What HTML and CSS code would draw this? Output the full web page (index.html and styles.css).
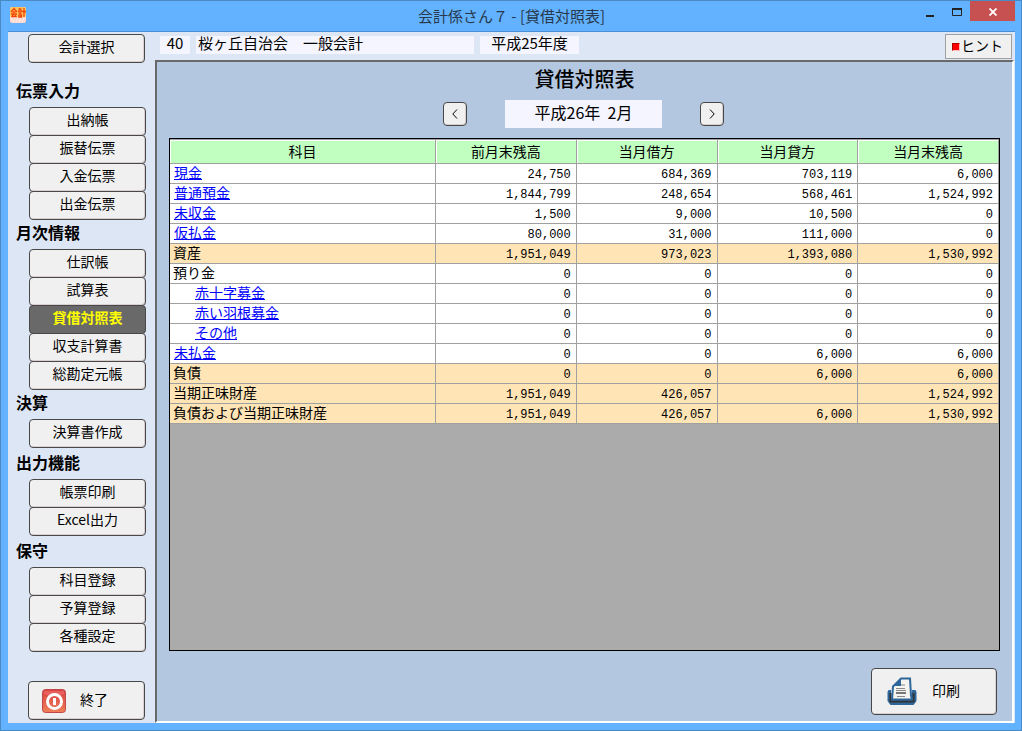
FILE: index.html
```
<!DOCTYPE html>
<html lang="ja">
<head>
<meta charset="utf-8">
<title>会計係さん７ - [貸借対照表]</title>
<link rel="stylesheet" href="styles.css">
</head>
<body>
<div class="window">
  <header class="titlebar">
    <svg class="app-icon" width="16" height="16" viewBox="0 0 16 16" aria-hidden="true">
      <rect width="16" height="16" rx="2" fill="#ffd9d0"/>
      <rect width="16" height="10" rx="2" fill="#ffc35c"/>
      <path d="M1 5 4 1.500 7 5M2.500 5h3M1 7h6M3.500 7 2 9.500h4L5 8M8.500 2h3M8 4h4M8.500 6h3M9 8v2h2.500V8zM12 4.500h4M14 1v9" stroke="#f0440a" stroke-width="1.300" fill="none"/>
      <path d="M1 12h1m2 0h1m2 0h1m2 0h1m2 0h1M3 14h1m2 0h1m2 0h1m2 0h1" stroke="#fff"/>
    </svg>
    <div class="window-title">会計係さん７ - [貸借対照表]</div>
    <div class="window-controls">
      <button class="win-btn" type="button" aria-label="最小化"><svg width="10" height="12" viewBox="0 0 10 12"><path d="M1 10h8" stroke="#222" stroke-width="2"/></svg></button>
      <button class="win-btn" type="button" aria-label="最大化"><svg width="10" height="8" viewBox="0 0 10 8"><path d="M.5 1v6.500h9V1" stroke="#222" fill="none"/><path d="M0 1h10" stroke="#222" stroke-width="2"/></svg></button>
      <button class="win-btn win-btn-close" type="button" aria-label="閉じる"><svg width="8" height="8" viewBox="0 0 8 8"><path d="M.5.5l7 7M7.500.5l-7 7" stroke="#fff" stroke-width="1.800"/></svg></button>
    </div>
  </header>
  <div class="client">
    <nav class="sidebar">
      <button class="btn select-btn" type="button">会計選択</button>
      <section class="group group-first">
        <h2 class="group-title">伝票入力</h2>
        <button class="btn" type="button">出納帳</button>
        <button class="btn" type="button">振替伝票</button>
        <button class="btn" type="button">入金伝票</button>
        <button class="btn" type="button">出金伝票</button>
      </section>
      <section class="group">
        <h2 class="group-title">月次情報</h2>
        <button class="btn" type="button">仕訳帳</button>
        <button class="btn" type="button">試算表</button>
        <button class="btn btn-active" type="button">貸借対照表</button>
        <button class="btn" type="button">収支計算書</button>
        <button class="btn" type="button">総勘定元帳</button>
      </section>
      <section class="group">
        <h2 class="group-title">決算</h2>
        <button class="btn" type="button">決算書作成</button>
      </section>
      <section class="group group-spaced">
        <h2 class="group-title">出力機能</h2>
        <button class="btn" type="button">帳票印刷</button>
        <button class="btn" type="button">Excel出力</button>
      </section>
      <section class="group group-spaced">
        <h2 class="group-title">保守</h2>
        <button class="btn" type="button">科目登録</button>
        <button class="btn" type="button">予算登録</button>
        <button class="btn" type="button">各種設定</button>
      </section>
      <button class="btn exit-btn" type="button">
        <svg width="24" height="24" viewBox="0 0 24 24" aria-hidden="true">
          <defs><linearGradient id="red" x1="0" y1="0" x2="0" y2="1"><stop offset="0" stop-color="#d84040"/><stop offset="1" stop-color="#f08058"/></linearGradient></defs>
          <rect x=".5" y=".5" width="23" height="23" rx="3" fill="url(#red)" stroke="#c04848"/>
          <path d="M2 2h20v3q-10 3-20 0z" fill="#f07070" opacity=".6"/>
          <circle cx="12.500" cy="12.500" r="7" fill="none" stroke="#fff" stroke-width="3"/>
          <path d="M12.500 9v7" stroke="#fff" stroke-width="3"/>
        </svg>
        <span>終了</span>
      </button>
    </nav>
    <div class="content">
      <div class="infobar">
        <div class="field field-code">40</div>
        <div class="field field-name">桜ヶ丘自治会　一般会計</div>
        <div class="field field-year">平成25年度</div>
        <button class="hint-btn" type="button"><span class="hint-mark"></span>ヒント</button>
      </div>
      <main class="panel">
        <h1 class="page-title">貸借対照表</h1>
        <div class="month-nav">
          <button class="btn month-btn" type="button" aria-label="前月"><svg width="6" height="10" viewBox="0 0 6 10"><path d="M5 .5.800 5 5 9.500" fill="none" stroke="#000"/></svg></button>
          <div class="month">平成26年&nbsp; 2月</div>
          <button class="btn month-btn" type="button" aria-label="翌月"><svg width="6" height="10" viewBox="0 0 6 10"><path d="M1 .5 5.200 5 1 9.500" fill="none" stroke="#000"/></svg></button>
        </div>
        <div class="grid">
          <table class="balance">
            <thead>
              <tr><th class="col-item" scope="col">科目</th><th scope="col">前月末残高</th><th scope="col">当月借方</th><th scope="col">当月貸方</th><th scope="col">当月末残高</th></tr>
            </thead>
            <tbody>
              <tr><td><a href="#">現金</a></td><td>24,750</td><td>684,369</td><td>703,119</td><td>6,000</td></tr>
              <tr><td><a href="#">普通預金</a></td><td>1,844,799</td><td>248,654</td><td>568,461</td><td>1,524,992</td></tr>
              <tr><td><a href="#">未収金</a></td><td>1,500</td><td>9,000</td><td>10,500</td><td>0</td></tr>
              <tr><td><a href="#">仮払金</a></td><td>80,000</td><td>31,000</td><td>111,000</td><td>0</td></tr>
              <tr class="total"><td>資産</td><td>1,951,049</td><td>973,023</td><td>1,393,080</td><td>1,530,992</td></tr>
              <tr><td>預り金</td><td>0</td><td>0</td><td>0</td><td>0</td></tr>
              <tr class="sub"><td><a href="#">赤十字募金</a></td><td>0</td><td>0</td><td>0</td><td>0</td></tr>
              <tr class="sub"><td><a href="#">赤い羽根募金</a></td><td>0</td><td>0</td><td>0</td><td>0</td></tr>
              <tr class="sub"><td><a href="#">その他</a></td><td>0</td><td>0</td><td>0</td><td>0</td></tr>
              <tr><td><a href="#">未払金</a></td><td>0</td><td>0</td><td>6,000</td><td>6,000</td></tr>
              <tr class="total"><td>負債</td><td>0</td><td>0</td><td>6,000</td><td>6,000</td></tr>
              <tr class="total"><td>当期正味財産</td><td>1,951,049</td><td>426,057</td><td></td><td>1,524,992</td></tr>
              <tr class="total"><td>負債および当期正味財産</td><td>1,951,049</td><td>426,057</td><td>6,000</td><td>1,530,992</td></tr>
            </tbody>
          </table>
        </div>
        <div class="actions">
          <button class="btn print-btn" type="button">
            <svg width="30" height="30" viewBox="0 0 30 30" aria-hidden="true">
              <path d="M4 13H1.500L.5 15v9l3 4h23l3-4v-9l-1-2H25v8H4z" fill="#2f6699"/>
              <path d="M3.500 16v8.500h23V16" fill="none" stroke="#333" stroke-width="2"/>
              <path d="M14 1.500h9l1 17 1 4H5l1-13z" fill="#f4f4f0" stroke="#2f6699" stroke-width="2"/>
              <path d="M14 1v8H6z" fill="#2f6699"/>
              <path d="M14 8h4M9 11.500h9M9 13.500h10M10 19.500h8" stroke="#888"/>
              <path d="M9 16h10" stroke="#777" stroke-width="2"/>
            </svg>
            <span>印刷</span>
          </button>
        </div>
      </main>
    </div>
  </div>
</div>
</body>
</html>
```
FILE: styles.css
```
* {
  box-sizing: border-box;
}

body {
  margin: 0;
  color: #000;
  font: 14px/20px "Noto Sans CJK JP", sans-serif;
}

button {
  color: inherit;
  font: inherit;
}

svg {
  display: block;
  flex: none;
}

.window {
  display: flex;
  flex-direction: column;
  min-height: 100vh;
  padding: 0 6px 7px 7px;
  background: #63b2ff;
  border: 1px solid #4a8ac4;
}

/* Title bar */
.titlebar {
  display: grid;
  grid-template-columns: 1fr auto 1fr;
  height: 30px;
}

.app-icon {
  margin: 6px 0 0 2px;
}

.window-title {
  color: #26384c;
  font-size: 15px;
  line-height: 30px;
}

.window-controls {
  display: flex;
  justify-content: flex-end;
  height: 20px;
}

.win-btn {
  display: flex;
  align-items: center;
  justify-content: center;
  width: 27px;
  padding: 2px 0 0;
  background: none;
  border: 0;
}

.win-btn-close {
  width: 45px;
  background: #c75050;
}

/* Client area */
.client {
  display: flex;
  flex: 1;
  background: #dce6f5;
  border-top: 1px solid #4a8fd6;
}

.sidebar {
  display: flex;
  flex-direction: column;
  width: 147px;
  padding: 2px 9px 3px 8px;
}

.btn {
  display: flex;
  align-items: center;
  justify-content: center;
  padding: 0 0 5px;
  background: #f0f0f0;
  border: 1px solid #484848;
  border-radius: 4px;
  box-shadow: inset -1px -1px #d8d0d0;
}

.select-btn {
  height: 29px;
  margin: 0 1px 0 12px;
}

.group {
  display: flex;
  flex-direction: column;
}

.group-first {
  padding-top: 15px;
}

.group-spaced {
  padding-top: 2px;
}

.group-title {
  margin: 0;
  padding-bottom: 5px;
  font-size: 16px;
  font-weight: 700;
  line-height: 24px;
}

.group .btn {
  height: 29px;
  margin: 0 0 0 13px;
}

.group .btn + .btn {
  margin-top: -1px;
}

.group .btn-active {
  color: #ff0;
  font-weight: 700;
  background: #696969;
  box-shadow: none;
}

.exit-btn {
  justify-content: flex-start;
  gap: 14px;
  height: 39px;
  margin: auto 1px 0 12px;
  padding: 0 13px;
}

.exit-btn span,
.print-btn span {
  padding-bottom: 4px;
}

.content {
  display: flex;
  flex: 1;
  flex-direction: column;
  min-width: 0;
}

.infobar {
  display: flex;
  align-items: flex-start;
  height: 28px;
  padding: 2px 3px 0 5px;
}

.field {
  height: 18px;
  margin-top: 2px;
  background: #f4f5ff;
  font-size: 15px;
  line-height: 14px;
}

.field-code {
  width: 30px;
  margin-right: 6px;
  text-align: center;
}

.field-name {
  width: 278px;
  margin-right: 6px;
  padding-left: 2px;
}

.field-year {
  width: 99px;
  text-align: center;
}

.hint-btn {
  display: flex;
  align-items: center;
  gap: 1px;
  height: 25px;
  margin-left: auto;
  padding: 0 8px 3px 6px;
  background: #f0f0f0;
  border: 1px solid #a0a0a0;
}

.hint-mark {
  width: 8px;
  height: 8px;
  margin-top: 4px;
  background: #f00;
  border: 1px solid #a00;
  border-right-color: #fbb;
  border-bottom-color: #fbb;
}

.panel {
  display: flex;
  flex: 1;
  flex-direction: column;
  margin-right: 1px;
  padding: 4px 12px 6px;
  background: #b4c7e1;
  border: 2px solid #696969;
  border-right-color: #fff;
  border-bottom-color: #fff;
}

.page-title {
  margin: 0;
  font-size: 20px;
  font-weight: 500;
  line-height: 26px;
  text-align: center;
}

.month-nav {
  display: flex;
  align-items: center;
  justify-content: center;
  gap: 38px;
  margin: 8px 0 10px;
  padding-right: 2px;
}

.month-btn {
  width: 24px;
  height: 24px;
  padding: 0 1px 1px 0;
}

.month {
  width: 157px;
  height: 28px;
  background: #f4f5ff;
  font-size: 16px;
  line-height: 25px;
  text-align: center;
}

/* Balance sheet */
.grid {
  flex: 1;
  background: #ababab;
  border: 1px solid #000;
}

.balance {
  width: 100%;
  table-layout: fixed;
  border-spacing: 0;
}

.balance th {
  height: 25px;
  padding: 0 0 2px;
  background: #c0ffc0;
  border: 1px solid #a0a0a0;
  border-width: 1px 1px 1px 0;
  box-shadow: inset 1px 1px #fff;
  font-weight: 400;
  line-height: 20px;
}

.balance .col-item {
  width: 266px;
}

.balance td {
  height: 20px;
  padding: 4px 5px 0 0;
  background: #fff;
  border: 1px solid #a0a0a0;
  border-width: 0 1px 1px 0;
  font: 12px/15px "Liberation Mono", monospace;
  text-align: right;
}

.balance td:first-child {
  padding: 0 0 2px 3px;
  font: 14px/17px "Noto Sans CJK JP", sans-serif;
  text-align: left;
}

.balance a {
  margin-left: 1px;
  color: #00f;
}

.balance .sub td:first-child {
  padding-left: 24px;
}

.balance .total td {
  background: #ffe4b5;
}

.actions {
  display: flex;
  justify-content: flex-end;
  padding: 17px 3px 0 0;
}

.print-btn {
  justify-content: flex-start;
  gap: 15px;
  width: 126px;
  height: 47px;
  padding: 0 15px;
}
```
